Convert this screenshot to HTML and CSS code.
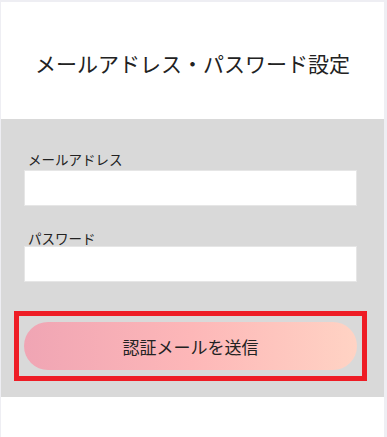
FILE: index.html
```html
<!DOCTYPE html>
<html lang="ja">
<head>
    <title>メールアドレス・パスワード設定</title>
    <meta charset="UTF-8">
    <meta name="viewport" content="width=device-width, initial-scale=1.0">
    <link rel="stylesheet" href="styles.css">
</head>
<body>
    <div class="pagina">
        <div class="encabezado"><h1>メールアドレス・パスワード設定</h1></div>
        <div class="formulario">
            <div class="campos">
                <label class="etiqueta etiqueta-mail">メールアドレス</label>
                <input class="entrada" type="email">
                <label class="etiqueta etiqueta-pass">パスワード</label>
                <input class="entrada" type="password">
            </div>
            <div class="marco">
                <button class="boton">認証メールを送信</button>
            </div>
        </div>
    </div>
</body>
</html>
```

FILE: styles.css
```css
body {
    margin: 0;
    background-color: #eeeef3;
    font-family: "Noto Sans CJK JP", "Noto Sans", sans-serif;
    color: #222;
}

.pagina {
    width: 383px;
    height: 435px;
    margin: 2px 0 0 1px;
    background-color: #fff;
}

.encabezado {
    height: 117px;
    display: flex;
    justify-content: center;
    align-items: center;
    padding-top: 4px;
    box-sizing: border-box;
}

.encabezado h1 {
    margin: 0;
    font-size: 21px;
    font-weight: 400;
    line-height: 30px;
}

.formulario {
    background-color: #d9d9d9;
    padding: 32px 17px 16px 13px;
}

.campos {
    padding: 0 10px;
}

.etiqueta {
    display: block;
    font-size: 13.5px;
    line-height: 16px;
    padding-left: 4px;
}

.etiqueta-mail {
    margin-bottom: 3px;
}

.etiqueta-pass {
    margin-top: 24px;
}

.entrada {
    display: block;
    width: 100%;
    height: 36px;
    margin: 0;
    box-sizing: border-box;
    border: 1px solid #e6e6e6;
    background-color: #fff;
    outline: none;
}

.marco {
    margin-top: 29px;
    border: 5px solid #ee1c25;
    padding: 6px 5px 6px 5px;
}

.boton {
    display: block;
    width: 100%;
    height: 48px;
    border: none;
    border-radius: 24px;
    background: linear-gradient(90deg, #f0a5b4 0%, #fdb7b8 50%, #ffd3c4 100%);
    font-family: "Noto Sans CJK JP", "Noto Sans", sans-serif;
    font-size: 17px;
    color: #222;
    cursor: pointer;
}
```
